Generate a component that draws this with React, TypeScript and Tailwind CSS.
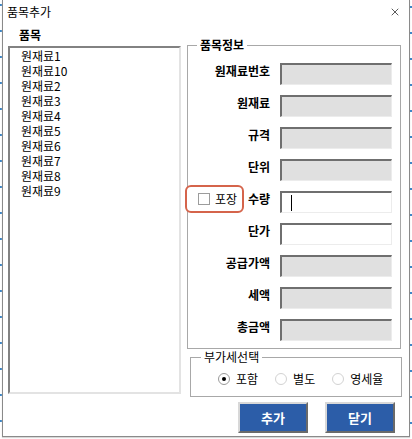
import { X } from 'lucide-react'

const items = ['원재료1', '원재료10', '원재료2', '원재료3', '원재료4', '원재료5', '원재료6', '원재료7', '원재료8', '원재료9']

const fields = [
  { label: '원재료번호', editable: false },
  { label: '원재료', editable: false },
  { label: '규격', editable: false },
  { label: '단위', editable: false },
  { label: '수량', editable: true, cursor: true, pack: true },
  { label: '단가', editable: true },
  { label: '공급가액', editable: false },
  { label: '세액', editable: false },
  { label: '총금액', editable: false },
]

function Field({ editable, cursor }: { editable: boolean; cursor?: boolean }) {
  return (
    <div
      className={`flex h-[22px] w-[112px] items-center border-t-2 border-l-2 border-b border-r border-t-[#6f6f6f] border-l-[#6f6f6f] border-b-[#ececec] border-r-[#ececec] pl-[9px] ${
        editable ? 'bg-white' : 'bg-[#e0e0e0]'
      }`}
    >
      {cursor && <div className="h-[16px] w-px bg-black" />}
    </div>
  )
}

function Radio({ label, checked }: { label: string; checked?: boolean }) {
  return (
    <div className="flex items-center gap-[6px]">
      <div
        className={`flex h-[12px] w-[12px] items-center justify-center rounded-full border ${
          checked ? 'border-[#9a9a9a]' : 'border-[#d2d2d2]'
        }`}
      >
        {checked && <div className="h-[4px] w-[4px] rounded-full bg-black" />}
      </div>
      <span className="text-[12px] leading-[16px] text-black">{label}</span>
    </div>
  )
}

function DialogButton({ label }: { label: string }) {
  return (
    <button className="flex h-[31px] w-[70px] items-center justify-center border-2 border-t-[#d8d8d8] border-l-[#d8d8d8] border-b-[#6a6a6a] border-r-[#6a6a6a] bg-[#2c5da8] text-[13px] font-bold text-white">
      {label}
    </button>
  )
}

export default function App() {
  return (
    <div className="flex h-[439px] w-[412px] bg-white font-['Noto_Sans_CJK_KR',sans-serif] text-black">
      <div className="h-full w-[2px] bg-[repeating-linear-gradient(to_bottom,transparent_0px,transparent_4px,#3d86c6_4px,#3d86c6_6px,transparent_6px,transparent_26px)]" />

      <div className="flex h-[437px] w-[408px] flex-col border-x border-b border-[#8a8a8a] bg-white shadow-[0_1px_1px_#d8d8d8]">
        <div className="flex h-[24px] items-center justify-between pl-[4px] pr-[8px]">
          <span className="text-[12px] leading-[16px]">품목추가</span>
          <X className="h-[12px] w-[12px] text-black" strokeWidth={1.3} />
        </div>

        <div className="flex pl-[5px]">
          <div className="flex w-[173px] flex-col">
            <div className="flex h-[22px] items-center pl-[11px] text-[12px] font-bold">품목</div>
            <div className="h-[348px] border-t-2 border-l-2 border-b-2 border-r-2 border-t-[#828282] border-l-[#828282] border-b-[#e3e3e3] border-r-[#e3e3e3] pl-[11px]">
              {items.map((name) => (
                <div key={name} className="h-[15px] text-[12px] leading-[15px]">
                  {name}
                </div>
              ))}
            </div>
          </div>

          <div className="ml-[6px] flex w-[215px] flex-col">
            <div className="relative mt-[21px] h-[304px] w-[214px] border border-[#a8a8a8] pt-[17px]">
              <span className="absolute -top-[9px] left-[9px] bg-white px-[3px] text-[12px] font-bold leading-[16px]">
                품목정보
              </span>
              <div className="flex flex-col gap-[10px]">
                {fields.map((f) => (
                  <div key={f.label} className="relative flex h-[22px] items-center">
                    {f.pack && (
                      <div className="absolute -left-[3px] -top-[6px] flex h-[28px] w-[59px] items-center rounded-[6px] border-2 border-[#d5644b] bg-white pl-[11px]">
                        <div className="h-[12px] w-[12px] border border-[#9c9c9c] bg-white" />
                        <span className="ml-[5px] text-[12px] leading-[16px]">포장</span>
                      </div>
                    )}
                    <div className="relative -top-[3px] w-[82px] text-right text-[12px] font-bold leading-[16px]">{f.label}</div>
                    <div className="ml-[10px]">
                      <Field editable={f.editable} cursor={f.cursor} />
                    </div>
                  </div>
                ))}
              </div>
            </div>

            <div className="relative ml-[3px] mt-[8px] flex h-[40px] w-[212px] items-center gap-[17px] border border-[#a8a8a8] pl-[27px] pt-[3px]">
              <span className="absolute -top-[9px] left-[10px] bg-white px-[3px] text-[12px] leading-[16px]">
                부가세선택
              </span>
              <Radio label="포함" checked />
              <Radio label="별도" />
              <Radio label="영세율" />
            </div>

            <div className="mt-[5px] flex justify-end gap-[17px] pr-[7px]">
              <DialogButton label="추가" />
              <DialogButton label="닫기" />
            </div>
          </div>
        </div>
      </div>

      <div className="h-full w-[2px] bg-[repeating-linear-gradient(to_bottom,transparent_0px,transparent_6px,#3d86c6_6px,#3d86c6_8px,transparent_8px,transparent_26px)]" />
    </div>
  )
}
